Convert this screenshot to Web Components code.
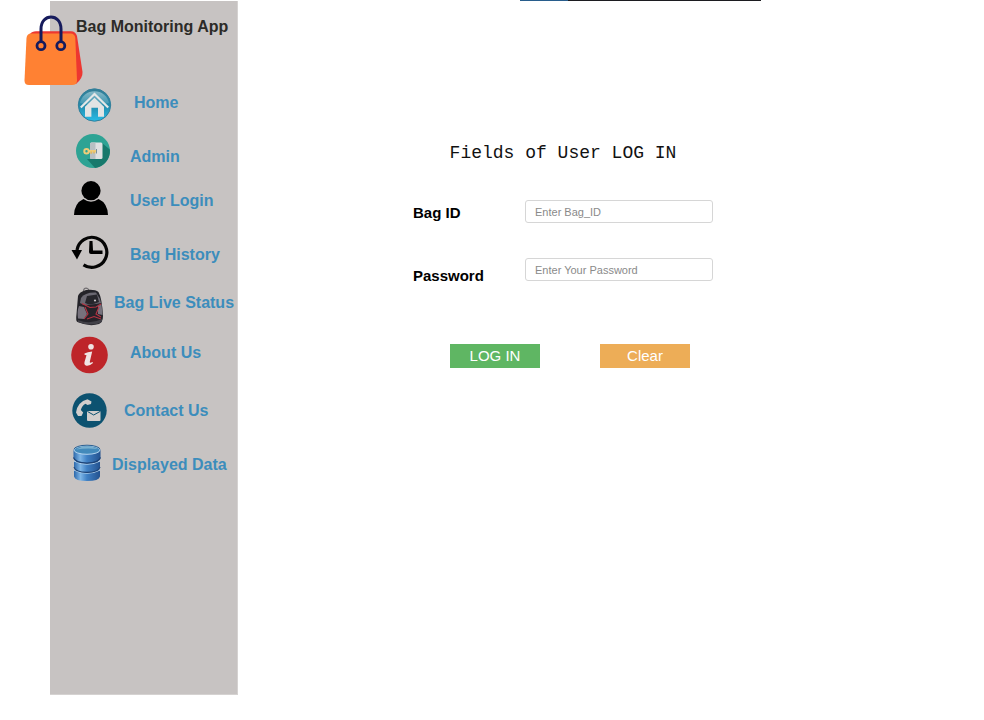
<!DOCTYPE html>
<html lang="en">
<head>
<meta charset="utf-8">
<title>Bag Monitoring App</title>
<style>
body { margin: 0; background: #fff; font-family: "Liberation Sans", Arial, sans-serif; }
</style>
</head>
<body>
<bag-app>
  <bag-sidebar slot="side">
    <nav-item icon="home" class="wide">Home</nav-item>
    <nav-item icon="admin">Admin</nav-item>
    <nav-item icon="user">User Login</nav-item>
    <nav-item icon="history">Bag History</nav-item>
    <nav-item icon="backpack" class="tight">Bag Live Status</nav-item>
    <nav-item icon="info">About Us</nav-item>
    <nav-item icon="contact" class="medium">Contact Us</nav-item>
    <nav-item icon="data" class="flush">Displayed Data</nav-item>
  </bag-sidebar>
  <login-form></login-form>
</bag-app>
<script>
const icons = {
  home: ['70 83 40 40', `
    <defs><linearGradient id="g" x1="0" y1="0" x2="0" y2="1"><stop offset="0" stop-color="#347e96"/><stop offset=".5" stop-color="#248aaa"/><stop offset="1" stop-color="#27bce8"/></linearGradient>
    <linearGradient id="s" x1="0" y1="0" x2="0" y2="1"><stop offset="0" stop-color="#a5cdd8" stop-opacity=".75"/><stop offset="1" stop-color="#6fb4c8" stop-opacity=".35"/></linearGradient></defs>
    <circle cx="94.500" cy="105" r="16.200" fill="url(#g)" stroke="#327f9b" stroke-width="1"/>
    <path d="M80 103A14.800 14.800 0 0 1 109 103Q95 107 80 103Z" fill="url(#s)"/>
    <path d="M80.800 107.500 94.500 94 108.200 107.500" fill="none" stroke="#e4e7e7" stroke-width="2.200"/>
    <path d="M85 106.700 94.500 97.700 104 106.700V116.800H98V107.700H91.400V116.800H85Z" fill="#e2e4e4"/>`],
  admin: ['70 137 40 40', `
    <circle cx="93" cy="151" r="17" fill="#2ea394"/>
    <path d="M102 143 109.800 149.500A17 17 0 0 1 95 168L87 159H90Z" fill="#17796c"/>
    <rect x="90" y="142.500" width="12.500" height="16.500" rx="1.500" fill="#dfe1e2"/>
    <path d="M90 144Q90 142.500 91.500 142.500H95.500V159H91.500Q90 159 90 157.500Z" fill="#b8c0c3"/>
    <circle cx="86.500" cy="151.200" r="2.200" fill="none" stroke="#f0cd79" stroke-width="2"/>
    <path d="M88.500 151.200H96.500" stroke="#f0cd79" stroke-width="2.400"/>
    <path d="M91.200 151.500V153.800M94 151.500V153.500" stroke="#e0b960" stroke-width="1.600"/>
    <path d="M96.500 149V153.500" stroke="#7c8f94" stroke-width="1"/>`],
  user: ['70 181 40 40', `
    <circle cx="91" cy="190.700" r="9.600"/>
    <path d="M74 215Q74.500 203 83.500 199Q91 204.500 98.500 199Q107.500 203 108 215Z"/>`],
  history: ['70 235 40 40', `
    <path d="M77 250A15 15 0 1 1 83.500 264.800" fill="none" stroke="#050505" stroke-width="3.200"/>
    <path d="M71.500 250H82L77 259.500Z"/>
    <path d="M89.500 241H92.500L93 250.500H102.500V254H91Q89 254 89 252Z"/>`],
  backpack: ['70 283 40 40', `
    <path d="M83.500 291Q84 287.500 87 288.300 89 289 89 291" fill="none" stroke="#706d70" stroke-width="1.200"/>
    <path d="M78 296Q79 292 86 290 95 289 98.500 292 102 298 103 316 103 322 99 324 89 327 77.500 322 75.500 321 76.500 314Z" fill="#242329"/>
    <path d="M81 298Q85 292 96 292.500L100 299 101 303 96 304 84 305 80 303Z" fill="#6b6872"/>
    <path d="M79 306 84 307 87 314 84 319 78 318.500Q77 311 79 306ZM98 306 101.500 304 102.500 315 98 314Z" fill="#77727d"/>
    <path d="M87 296 97 294.500 99 302Q91 306 85 303Z" fill="#27262c"/>
    <path d="M82 303.500 90 307.500 96 307 101 304M85 307 88 314 84 319M99 307 96 314 101 317M87 319 94 316.500 101 319" fill="none" stroke="#b83343" stroke-width="1.100"/>
    <path d="M78 320Q90 325 102 319V322Q92 327 78 322Z" fill="#414047"/>
    <circle cx="95" cy="300.500" r="1.100" fill="#c9c5c8"/>`],
  info: ['70 333 40 40', `
    <circle cx="89.500" cy="355" r="18.300" fill="#be2529"/>
    <circle cx="91" cy="346.700" r="2.800" fill="#f0e4e3"/>
    <path d="M84.500 353.500Q87.500 352 92.200 351.600L89.800 361.800Q89.500 363.500 92.500 362L93 363Q89.500 366.200 86.500 365.700 83.800 365.200 84.500 362L86.500 355.200 84.500 354.800Z" fill="#f0e4e3"/>`],
  contact: ['70 391 40 40', `
    <circle cx="89.500" cy="410.500" r="17.200" fill="#0c5270"/>
    <path d="M76 412.500Q77.500 402 87.500 399.300L91.500 401.500 91 404 87.500 405 85.500 403.700Q82 405.500 80.800 410L83.200 412.500 81.500 416 78 416Z" fill="#d2cfcd"/>
    <rect x="87" y="411" width="13.500" height="10" rx="1" fill="#d2cfcd"/>
    <path d="M87.500 411.500 93.700 415 100 411.500" fill="none" stroke="#0c5270" stroke-width="1"/>`],
  data: ['70 445 40 40', `
    <defs><linearGradient id="b"><stop offset="0" stop-color="#2c68ab"/><stop offset=".25" stop-color="#7db5e6"/><stop offset=".5" stop-color="#3f80c4"/><stop offset="1" stop-color="#24528f"/></linearGradient></defs>
    <path d="M76 456H98V474H76Z" fill="#173c6c"/>
    <path d="M74 470Q87 476.500 100 470V476.500Q99 481 87 481 75 481 74 476.500Z" fill="url(#b)"/>
    <path d="M74 470Q87 476.500 100 470" fill="none" stroke="#b5d5ef" stroke-width="1.200"/>
    <path d="M74 461Q87 467.500 100 461V467Q99 472.300 87 472.300 75 472.300 74 467Z" fill="url(#b)"/>
    <path d="M74 467Q75 472.300 87 472.300 99 472.300 100 467" fill="none" stroke="#1c4377" stroke-width="1.200"/>
    <path d="M74 461Q87 467.500 100 461" fill="none" stroke="#b5d5ef" stroke-width="1.200"/>
    <path d="M73.500 450V457.500Q75 463 87 463 99 463 100.500 457.500V450Z" fill="url(#b)"/>
    <path d="M73.500 457.500Q75 463 87 463 99 463 100.500 457.500" fill="none" stroke="#1c4377" stroke-width="1.200"/>
    <ellipse cx="87" cy="450" rx="13" ry="4.300" fill="#438abb" stroke="#b5d5ef" stroke-width="1"/>
    <path d="M74 449.500A13 4.300 0 0 1 100 449.500" fill="none" stroke="#2b6091" stroke-width="1"/>
    <path d="M76 449.500Q87 443.500 98 449 86 448 76 449.500Z" fill="#79b0cf"/>`]
};

class BagApp extends HTMLElement {
  constructor() {
    super();
    this.attachShadow({ mode: 'open' }).innerHTML = `
      <style>
        :host { display: grid; grid-template-columns: auto 1fr; align-items: start; min-height: 100vh; padding-left: 50px; box-sizing: border-box; }
        main { display: block; min-width: 0; }
        .strip { width: 241px; height: 1px; margin-left: 282px; background: linear-gradient(90deg, #285d8c 20%, #1c1c20 20%); }
      </style>
      <slot name="side"></slot>
      <main><div class="strip"></div><slot></slot></main>`;
  }
}

class BagSidebar extends HTMLElement {
  constructor() {
    super();
    this.attachShadow({ mode: 'open' }).innerHTML = `
      <style>
        :host { position: relative; display: block; box-sizing: border-box; width: 188px; min-height: calc(100vh - 26px); margin-top: 1px; background: #c7c3c2; border: solid #d5d2d1; border-width: 0 1px 1px 0; }
        .logo { position: absolute; left: -26px; top: 14px; width: 60px; height: 72px; }
        h1 { position: relative; margin: 0; padding: 16px 0 0 26px; font-size: 16px; line-height: 20px; color: #2c2b28; white-space: nowrap; }
        nav { display: flex; flex-direction: column; padding: 46px 0 24px 20px; }
        ::slotted(nav-item:nth-child(2)), ::slotted(nav-item:nth-child(4)), ::slotted(nav-item:nth-child(8)) { margin-top: 14px; }
        ::slotted(nav-item:nth-child(3)) { margin-top: 4px; }
        ::slotted(nav-item:nth-child(5)) { margin-top: 8px; }
        ::slotted(nav-item:nth-child(6)) { margin-top: 10px; }
        ::slotted(nav-item:nth-child(7)) { margin-top: 18px; }
      </style>
      <svg class="logo" viewBox="24 15 60 72" aria-hidden="true">
        <path d="M30 34Q32 31.200 36 31.200H71Q75.500 31.200 77 36L82.500 72Q83 78 76 84L66 84Z" fill="#ed3731"/>
        <path d="M31 33.500H70.500Q74.800 33.500 75.300 38L77 80.500Q77 85 72 85H29Q24.500 85 24.500 80.500L26.500 38Q27 33.500 31 33.500Z" fill="#ff8133"/>
        <path d="M41 42.500V29C41 13 61 13 61 29V42.500" fill="none" stroke="#161b5c" stroke-width="3"/>
        <g fill="#ff8133" stroke="#161b5c" stroke-width="2.800"><circle cx="41" cy="45.700" r="4"/><circle cx="60.800" cy="45.700" r="4"/></g>
      </svg>
      <h1>Bag Monitoring App</h1>
      <nav aria-label="Main"><slot></slot></nav>`;
  }
}

class NavItem extends HTMLElement {
  constructor() {
    super();
    const [box, art] = icons[this.getAttribute('icon')];
    this.attachShadow({ mode: 'open' }).innerHTML = `
      <style>
        :host { display: block; --gap: 20px; }
        :host(.wide) { --gap: 24px; }
        :host(.medium) { --gap: 14px; }
        :host(.tight) { --gap: 4px; }
        :host(.flush) { --gap: 2px; }
        a { display: flex; align-items: center; gap: var(--gap); min-height: 40px; font-size: 16px; font-weight: bold; line-height: 20px; color: #3c8dbc; text-decoration: none; white-space: nowrap; }
        svg { flex: none; width: 40px; height: 40px; overflow: visible; }
      </style>
      <a href="#${this.getAttribute('icon')}"><svg viewBox="${box}" aria-hidden="true">${art}</svg><span><slot></slot></span></a>`;
  }
}

class LoginForm extends HTMLElement {
  constructor() {
    super();
    this.attachShadow({ mode: 'open' }).innerHTML = `
      <style>
        :host { display: block; padding: 142px 20px 20px 175px; }
        form { max-width: 300px; }
        h2 { margin: 0 0 37px; font: 18px/20px "Liberation Mono", "Courier New", monospace; color: #111; text-align: center; white-space: nowrap; }
        .row { display: grid; grid-template-columns: 112px 1fr; align-items: start; margin-bottom: 32px; }
        label { font-size: 15px; font-weight: bold; line-height: 26px; color: #000; }
        .low label { padding-top: 5px; }
        input { box-sizing: border-box; width: 100%; height: 23px; padding: 0 9px; border: 1px solid #d6d6d6; border-radius: 3px; background: #fff; font: 11px "Liberation Sans", Arial, sans-serif; color: #333; }
        input::placeholder { color: #8a8a8a; opacity: 1; }
        .actions { display: flex; gap: 60px; margin-top: 55px; padding-left: 37px; }
        button { width: 90px; height: 24px; padding: 0; border: 0; border-radius: 0; font: 15px/24px "Liberation Sans", Arial, sans-serif; color: #fff; }
        .go { background: #5fb663; }
        .clear { background: #edad57; }
      </style>
      <form>
        <h2>Fields of User LOG IN</h2>
        <div class="row"><label for="bag">Bag ID</label><input id="bag" type="text" placeholder="Enter Bag_ID"></div>
        <div class="row low"><label for="pass">Password</label><input id="pass" type="password" placeholder="Enter Your Password"></div>
        <div class="actions"><button class="go" type="submit">LOG IN</button><button class="clear" type="reset">Clear</button></div>
      </form>`;
  }
}

customElements.define('bag-app', BagApp);
customElements.define('bag-sidebar', BagSidebar);
customElements.define('nav-item', NavItem);
customElements.define('login-form', LoginForm);
</script>
</body>
</html>
